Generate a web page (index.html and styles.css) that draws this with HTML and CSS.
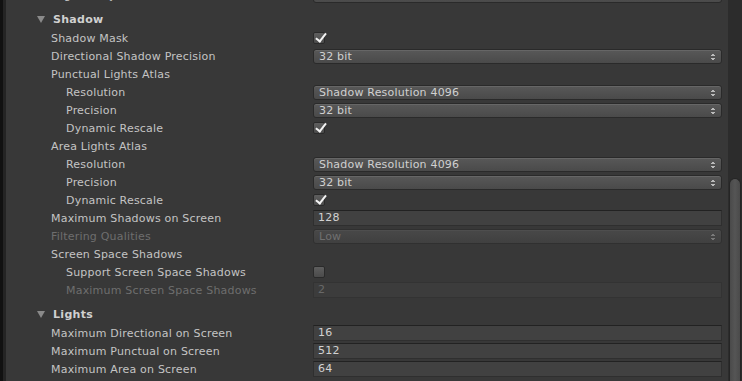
FILE: index.html
```html
<!DOCTYPE html>
<html lang="en">
<head>
<meta charset="UTF-8">
<meta name="viewport" content="width=device-width, initial-scale=1.0">
<link rel="stylesheet" href="styles.css">
</head>
<body>

<div class="window">
    <div class="edge"></div>
    <div class="inspector">
        <div class="row row-cut">
            <span class="label lvl1">Fog Quality</span>
            <div class="popup"></div>
        </div>

        <div class="section">
            <span class="foldout"></span>
            <span>Shadow</span>
        </div>
        <div class="row">
            <span class="label lvl1">Shadow Mask</span>
            <div class="field"><span class="toggle on"></span></div>
        </div>
        <div class="row">
            <span class="label lvl1">Directional Shadow Precision</span>
            <div class="popup"><span>32 bit</span></div>
        </div>
        <div class="row">
            <span class="label lvl1">Punctual Lights Atlas</span>
        </div>
        <div class="row">
            <span class="label lvl2">Resolution</span>
            <div class="popup"><span>Shadow Resolution 4096</span></div>
        </div>
        <div class="row">
            <span class="label lvl2">Precision</span>
            <div class="popup"><span>32 bit</span></div>
        </div>
        <div class="row">
            <span class="label lvl2">Dynamic Rescale</span>
            <div class="field"><span class="toggle on"></span></div>
        </div>
        <div class="row">
            <span class="label lvl1">Area Lights Atlas</span>
        </div>
        <div class="row">
            <span class="label lvl2">Resolution</span>
            <div class="popup"><span>Shadow Resolution 4096</span></div>
        </div>
        <div class="row">
            <span class="label lvl2">Precision</span>
            <div class="popup"><span>32 bit</span></div>
        </div>
        <div class="row">
            <span class="label lvl2">Dynamic Rescale</span>
            <div class="field"><span class="toggle on"></span></div>
        </div>
        <div class="row">
            <span class="label lvl1">Maximum Shadows on Screen</span>
            <div class="textbox">128</div>
        </div>
        <div class="row disabled">
            <span class="label lvl1">Filtering Qualities</span>
            <div class="popup"><span>Low</span></div>
        </div>
        <div class="row">
            <span class="label lvl1">Screen Space Shadows</span>
        </div>
        <div class="row">
            <span class="label lvl2">Support Screen Space Shadows</span>
            <div class="field"><span class="toggle"></span></div>
        </div>
        <div class="row disabled">
            <span class="label lvl2">Maximum Screen Space Shadows</span>
            <div class="textbox">2</div>
        </div>

        <div class="section">
            <span class="foldout"></span>
            <span>Lights</span>
        </div>
        <div class="row">
            <span class="label lvl1">Maximum Directional on Screen</span>
            <div class="textbox">16</div>
        </div>
        <div class="row">
            <span class="label lvl1">Maximum Punctual on Screen</span>
            <div class="textbox">512</div>
        </div>
        <div class="row">
            <span class="label lvl1">Maximum Area on Screen</span>
            <div class="textbox">64</div>
        </div>
    </div>
    <div class="scrollbar">
        <div class="thumb"></div>
    </div>
</div>

</body>
</html>
```

FILE: styles.css
```css
html, body {
    margin: 0;
    height: 100%;
    overflow: hidden;
}
body {
    font-family: "DejaVu Sans", sans-serif;
    font-size: 11px;
    background-color: #383838;
    color: #c4c4c4;
}
.window {
    display: flex;
    height: 381px;
}
.edge {
    width: 6px;
    flex: 0 0 6px;
    background: linear-gradient(to right, #111 0, #111 3px, #242424 3px);
}
.inspector {
    flex: 1;
    padding-right: 6px;
    overflow: hidden;
}
.scrollbar {
    flex: 0 0 14px;
    background-color: #2c2c2c;
    position: relative;
}
.thumb {
    position: absolute;
    top: 178px;
    left: 1px;
    right: 1px;
    bottom: 0;
    border-radius: 6px 6px 0 0;
    background: linear-gradient(to right, #4a4a4a, #555 50%, #4a4a4a);
    border: 1px solid #252525;
    border-bottom: none;
}

.row {
    display: grid;
    grid-template-columns: 307px 1fr;
    align-items: center;
    height: 18px;
}
.row-cut {
    margin-top: -14px;
}
.label {
    white-space: nowrap;
    letter-spacing: 0.2px;
}
.lvl1 {
    padding-left: 45px;
}
.lvl2 {
    padding-left: 60px;
}
.disabled {
    color: #6e6e6e;
}

.section {
    display: flex;
    align-items: center;
    height: 20px;
    margin-top: 5px;
    padding-left: 31px;
    font-weight: bold;
    color: #d0d0d0;
    letter-spacing: 0.3px;
}
.foldout {
    width: 0;
    height: 0;
    border-left: 4px solid transparent;
    border-right: 4px solid transparent;
    border-top: 7px solid #8a8a8a;
    margin-right: 8px;
}

.field {
    display: flex;
    align-items: center;
}
.toggle {
    width: 10px;
    height: 10px;
    border: 1px solid #2a2a2a;
    border-radius: 2px;
    background: linear-gradient(#5e5e5e, #4b4b4b);
    position: relative;
}
.toggle.on::after {
    content: "";
    position: absolute;
    left: 4px;
    top: -2px;
    width: 4px;
    height: 9px;
    border: solid #f4f4f4;
    border-width: 0 2px 2px 0;
    transform: rotate(38deg);
}

.popup {
    position: relative;
    height: 13px;
    line-height: 13px;
    padding-left: 5px;
    border: 1px solid #2a2a2a;
    border-radius: 3px;
    background: linear-gradient(#585858, #4a4a4a);
    box-shadow: inset 0 1px 0 #666;
    color: #d0d0d0;
    letter-spacing: 0.2px;
}
.popup::after {
    content: "";
    position: absolute;
    right: 6px;
    top: 3px;
    width: 4px;
    height: 8px;
    background:
        linear-gradient(to bottom right, transparent 50%, #bbb 50%) 0 0 / 2px 3px no-repeat,
        linear-gradient(to bottom left, transparent 50%, #bbb 50%) 2px 0 / 2px 3px no-repeat,
        linear-gradient(to top right, transparent 50%, #bbb 50%) 0 5px / 2px 3px no-repeat,
        linear-gradient(to top left, transparent 50%, #bbb 50%) 2px 5px / 2px 3px no-repeat;
}
.disabled .popup {
    color: #707070;
    background: linear-gradient(#484848, #404040);
    box-shadow: inset 0 1px 0 #4e4e4e;
    border-color: #303030;
}
.disabled .popup::after {
    opacity: 0.45;
}

.textbox {
    height: 14px;
    line-height: 14px;
    padding-left: 4px;
    background-color: #414141;
    border: 1px solid #2f2f2f;
    border-top-color: #222;
    color: #d2d2d2;
    letter-spacing: 0.2px;
}
.disabled .textbox {
    background-color: #3c3c3c;
    border-color: #333;
    color: #696969;
}
```
